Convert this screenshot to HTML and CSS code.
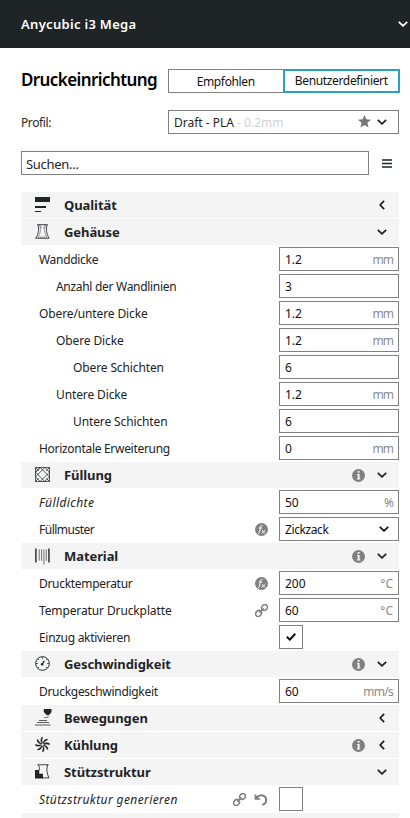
FILE: index.html
```html
<!DOCTYPE html>
<html lang="de">
<head>
<meta charset="utf-8">
<title>Druckeinrichtung</title>
<link rel="stylesheet" href="styles.css">
</head>
<body>
<svg class="defs" width="0" height="0" aria-hidden="true">
  <symbol id="down" viewBox="0 0 10 6"><path d="M.8.8 5 4.8 9.2.8" fill="none" stroke="currentColor" stroke-width="1.8"/></symbol>
  <symbol id="left" viewBox="0 0 6 10"><path d="M5.1.8 1.2 5l3.9 4.2" fill="none" stroke="currentColor" stroke-width="1.8"/></symbol>
  <symbol id="info" viewBox="0 0 13 13"><circle cx="6.5" cy="6.5" r="6.5" fill="#808080"/><path d="M5.6 2h2v1.7h-2zM5 5h2.6v4.5h.8v1H4.8v-1h.9V6H5z" fill="#f4f4f4"/></symbol>
  <symbol id="fx" viewBox="0 0 13 13"><circle cx="6.5" cy="6.5" r="6.5" fill="#808080"/><path d="M7.6 2.700C6.300 2 5.700 2.900 5.500 4L4.400 9.400C4.200 10.400 3.700 10.600 3 10.300M3.800 5h3.400M7 7.100l3 3.400M10.400 7.100l-3.800 3.400" fill="none" stroke="#fff" stroke-width="1"/></symbol>
  <symbol id="link" viewBox="0 0 14 14"><g transform="rotate(-45 7 7)" fill="none" stroke="#808080" stroke-width="1.700"><rect x="-.9" y="4.200" width="6.600" height="5.600" rx="2.800"/><rect x="8.300" y="4.200" width="6.600" height="5.600" rx="2.800"/><path d="M3.800 7h6.400"/></g></symbol>
  <symbol id="reset" viewBox="0 0 14 13"><path d="M2.500 4.700C6 .6 12.200 2 12.200 7c0 2.600-1.700 4.300-4 4.900" fill="none" stroke="#808080" stroke-width="2"/><path d="M.6.8v5.900h6.200z" fill="#808080"/></symbol>
  <symbol id="quality" viewBox="0 0 15 15"><path d="M0 0h15v5H0zM0 9h11v2H0zM0 14h6v1H0z" fill="#1f2527"/></symbol>
  <symbol id="shell" viewBox="0 0 16 16"><path d="M2.500.700h11M.5 15.200h14.500M3 .700c1.500 5 1 9-2 14.500M13 .700c-1.500 5-1 9 2 14.500" fill="none" stroke="#1f2527" stroke-width=".9"/><path d="M5 1.500c1.400 5 .8 8-1.500 12.500h9C10.200 9.500 9.600 6.500 11 1.500M5 1.500c1.500 0 1.200 2.500 1.500 3.500M11 1.500C9.500 1.500 9.800 4 9.500 5" fill="none" stroke="#1f2527" stroke-width=".6" stroke-dasharray="1.500 .6"/></symbol>
  <symbol id="infill" viewBox="0 0 16 16"><g fill="none" stroke="#1f2527" stroke-width=".8"><path d="M.5.500h15v15H.500z"/><path d="M.5 5.500l5-5 10 10-5 5-10-10 5-5M10.500.5l5 5-10 10-5-5 10-10M.5.500 4 4M15.500.5 12 4M.5 15.500 4 12M15.500 15.500 12 12"/></g></symbol>
  <symbol id="material" viewBox="0 0 16 18"><path d="M.2 1h1.500v15H.2zM14.100 1h1.500v15h-1.500z" fill="#1f2527"/><path d="M4.500 2v12M7 2v12M9.500 2v16M12 2v12" stroke="#444" stroke-width=".8"/></symbol>
  <symbol id="speed" viewBox="0 0 16 16"><g fill="none" stroke="#1f2527"><circle cx="8" cy="8" r="7.300" stroke-width="1"/><path d="M8 1v2M1 8h2M13 8h2M3 3l1.300 1.300M13 3l-1.300 1.300M3 13l1.300-1.300M13 13l-1.300-1.300" stroke-width=".8"/><path d="M7.500 9 10 5.200" stroke-width="1.300"/></g><circle cx="7.600" cy="8.700" r="1.300" fill="#1f2527"/></symbol>
  <symbol id="travel" viewBox="0 0 17 17"><path d="M8.800 0h7.700v3l-2.300 3h-2.700L8.800 3z" fill="#1f2527"/><path d="M13 5v3.500H9" fill="none" stroke="#777" stroke-width=".9"/><path d="M4 11.500h8M2 13.500h12M0 16h15.500" fill="none" stroke="#333" stroke-width=".8"/></symbol>
  <symbol id="cooling" viewBox="0 0 16 16"><g fill="#1f2527"><path id="blade" d="M7.500 6.800C5.500 5 5.400 2.200 7.200 0L8.600.600C7.300 3 7.400 4.800 8.600 6.700z"/><use href="#blade" transform="rotate(45 8 8)"/><use href="#blade" transform="rotate(90 8 8)"/><use href="#blade" transform="rotate(135 8 8)"/><use href="#blade" transform="rotate(180 8 8)"/><use href="#blade" transform="rotate(225 8 8)"/><use href="#blade" transform="rotate(270 8 8)"/><use href="#blade" transform="rotate(315 8 8)"/></g></symbol>
  <symbol id="support" viewBox="0 0 16 16"><path d="M0 6.500h4.500v4h4v5H0z" fill="#1f2527"/><path d="M2.800.8h11.700M3.500.8c1.300 2 1.500 4 .8 6M13.500.8c-1.600 5-.8 9 1.300 14H8" fill="none" stroke="#1f2527" stroke-width=".9"/></symbol>
</svg>

<header class="machine"><span class="machine-name">Anycubic i3 Mega</span><svg class="down"><use href="#down"/></svg></header>

<main class="panel">
  <div class="setup">
    <h1>Druckeinrichtung</h1>
    <div class="tabs"><button class="tab">Empfohlen</button><button class="tab active">Benutzerdefiniert</button></div>
  </div>
  <div class="profile">
    <span class="profile-label">Profil:</span>
    <div class="profile-box"><span class="profile-name">Draft - PLA <i>- 0.2mm</i></span><svg class="star" viewBox="0 0 13 13"><path d="M6.500 0 8.300 4.300l4.700.4-3.600 3 1.200 4.800-4.100-2.600-4.100 2.600 1.200-4.800-3.600-3 4.700-.4z" fill="#777"/></svg><svg class="down"><use href="#down"/></svg></div>
  </div>
  <div class="search"><div class="search-box">Suchen...</div><svg class="menu" viewBox="0 0 10 9"><path d="M0 1h10M0 4.500h10M0 8h10" stroke="#1f2527" stroke-width="1.700"/></svg></div>

  <section class="settings">
    <div class="cat"><svg class="cat-icon"><use href="#quality"/></svg><b>Qualität</b><svg class="left"><use href="#left"/></svg></div>
    <div class="cat"><svg class="cat-icon"><use href="#shell"/></svg><b>Gehäuse</b><svg class="down"><use href="#down"/></svg></div>
    <div class="row"><label>Wanddicke</label><div class="field">1.2<span>mm</span></div></div>
    <div class="row in1"><label>Anzahl der Wandlinien</label><div class="field">3</div></div>
    <div class="row"><label class="wide">Obere/untere Dicke</label><div class="field">1.2<span>mm</span></div></div>
    <div class="row in1"><label class="wide">Obere Dicke</label><div class="field">1.2<span>mm</span></div></div>
    <div class="row in2"><label class="wide">Obere Schichten</label><div class="field">6</div></div>
    <div class="row in1"><label class="wide">Untere Dicke</label><div class="field">1.2<span>mm</span></div></div>
    <div class="row in2"><label class="wide">Untere Schichten</label><div class="field">6</div></div>
    <div class="row"><label>Horizontale Erweiterung</label><div class="field">0<span>mm</span></div></div>
    <div class="cat"><svg class="cat-icon"><use href="#infill"/></svg><b>Füllung</b><svg class="info"><use href="#info"/></svg><svg class="down"><use href="#down"/></svg></div>
    <div class="row"><label class="changed">Fülldichte</label><div class="field">50<span>%</span></div></div>
    <div class="row"><label class="narrow">Füllmuster</label><svg class="info"><use href="#fx"/></svg><div class="field select">Zickzack<svg class="down"><use href="#down"/></svg></div></div>
    <div class="cat"><svg class="cat-icon material"><use href="#material"/></svg><b>Material</b><svg class="info"><use href="#info"/></svg><svg class="down"><use href="#down"/></svg></div>
    <div class="row"><label>Drucktemperatur</label><svg class="info"><use href="#fx"/></svg><div class="field">200<span class="degree">°C</span></div></div>
    <div class="row"><label class="wide">Temperatur Druckplatte</label><svg class="link"><use href="#link"/></svg><div class="field">60<span class="degree">°C</span></div></div>
    <div class="row"><label>Einzug aktivieren</label><div class="check"><svg viewBox="0 0 10 8"><path d="M.8 3.800 3.800 6.600 9.300.8" fill="none" stroke="#111" stroke-width="2.100"/></svg></div></div>
    <div class="cat"><svg class="cat-icon"><use href="#speed"/></svg><b>Geschwindigkeit</b><svg class="info"><use href="#info"/></svg><svg class="down"><use href="#down"/></svg></div>
    <div class="row"><label>Druckgeschwindigkeit</label><div class="field">60<span class="speed">mm/s</span></div></div>
    <div class="cat"><svg class="cat-icon travel"><use href="#travel"/></svg><b>Bewegungen</b><svg class="left"><use href="#left"/></svg></div>
    <div class="cat"><svg class="cat-icon"><use href="#cooling"/></svg><b>Kühlung</b><svg class="info"><use href="#info"/></svg><svg class="left"><use href="#left"/></svg></div>
    <div class="cat"><svg class="cat-icon"><use href="#support"/></svg><b>Stützstruktur</b><svg class="down"><use href="#down"/></svg></div>
    <div class="row"><label class="changed">Stützstruktur generieren</label><svg class="link"><use href="#link"/></svg><svg class="reset"><use href="#reset"/></svg><div class="check"></div></div>
    <div class="cat"></div>
  </section>
</main>
</body>
</html>
```
FILE: styles.css
```css
* { box-sizing: border-box; }
html, body { height: 818px; overflow: hidden; }
body { margin: 0; background: #fff; color: #1f2527; font: 12px/24px "Noto Sans", sans-serif; }
svg { display: block; flex: none; }
.defs { position: absolute; }
.down { width: 10px; height: 6px; }
.left { width: 6px; height: 10px; }
.machine { height: 48px; padding: 0 2px 0 21px; background: #1f2527; color: #fff; display: flex; align-items: center; justify-content: space-between; font-size: 13px; font-weight: 600; letter-spacing: .3px; }
.panel { padding: 21px 11px 0 21px; }
.setup { height: 24px; display: flex; justify-content: space-between; margin-right: -1px; }
h1 { margin: 0; font-size: 17px; line-height: 22px; font-weight: 600; color: #000; letter-spacing: -.6px; }
.tabs { display: flex; width: 232px; }
.tab { flex: 1; height: 24px; padding: 2px 0 0; border: 1px solid #808080; background: #fff; color: #111; font: inherit; line-height: 20px; letter-spacing: -.35px; }
.tab + .tab { margin-left: -1px; }
.tab.active { padding: 0; border: 2px solid #2a9fcb; }
.profile { height: 24px; display: flex; justify-content: space-between; margin-top: 17px; }
.profile-label { padding-top: 1px; letter-spacing: -.4px; }
.profile-box { width: 231px; height: 24px; border: 1px solid #808080; display: flex; align-items: center; padding: 0 11px 0 5px; }
.profile-name { margin-right: auto; padding-top: 2px; }
.profile-name i { font-style: normal; color: #d2d2d2; }
.star { width: 13px; height: 13px; margin: -1px 6px 0 0; }
.search { display: flex; align-items: center; justify-content: space-between; margin-top: 17px; padding-right: 7px; }
.search-box { width: 348px; height: 24px; border: 1px solid #808080; padding-left: 4px; line-height: 24px; font-size: 13px; letter-spacing: -.3px; }
.menu { width: 10px; height: 9px; }
.settings { margin-top: 17px; }
.cat { height: 26px; margin-bottom: 1px; padding: 0 12px 0 14px; background: #f4f4f4; display: flex; align-items: center; }
.cat b { margin: 0 auto 0 14px; font-size: 13px; font-weight: 700; letter-spacing: -.08px; }
.cat-icon { width: 15px; height: 15px; margin-top: -1px; }
.cat-icon.material { height: 18px; margin-top: 0; }
.cat-icon.travel { width: 17px; height: 17px; margin-right: -2px; }
.cat .info { margin-right: 12px; }
.cat .info + .left { margin-left: 2px; }
.cat .left { margin-right: 2px; }
.info { width: 13px; height: 13px; }
.row { height: 27px; padding: 0 0 1px 18px; display: flex; align-items: center; }
.in1 { padding-left: 35px; }
.in2 { padding-left: 52px; }
.row label { margin-right: auto; padding-top: 2px; color: #222; letter-spacing: -.3px; }
.row .wide { letter-spacing: -.12px; }
.row .narrow { letter-spacing: -.5px; }
.row .changed { font-style: italic; letter-spacing: .4px; }
.field { width: 120px; height: 24px; border: 1px solid #808080; padding: 2px 5px 0; display: flex; align-items: center; justify-content: space-between; color: #111; }
.select { letter-spacing: -.4px; }
.field .down { margin: -2px 4px 0 0; }
.field span { color: #8a8a8a; letter-spacing: -1px; }
.field .degree { letter-spacing: 0; }
.field .speed { letter-spacing: -.7px; }
.row > svg { margin-right: 11px; }
.row .link { width: 13px; height: 13px; }
.row .reset { width: 14px; height: 13px; margin-left: -3px; }
.check { width: 24px; height: 24px; margin-right: 96px; border: 1px solid #808080; display: grid; place-items: center; }
.check svg { width: 10px; height: 8px; }
```
